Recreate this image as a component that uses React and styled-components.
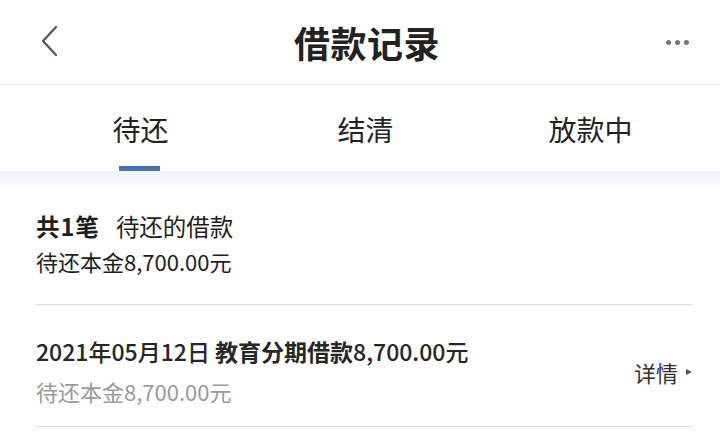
import styled, { createGlobalStyle } from "styled-components";

const GlobalStyle = createGlobalStyle`
  body {
    margin: 0;
    background: #fff;
    font-family: "Noto Sans CJK SC", "Noto Sans", sans-serif;
    color: #222;
  }
`;

const tabs = ["待还", "结清", "放款中"];

const App = () => {
  return (
    <Page>
      <GlobalStyle />
      <Header>
        <BackButton>
          <svg width="18" height="32" viewBox="0 0 18 32">
            <path d="M16 2 L3 16 L16 30" fill="none" stroke="#555" strokeWidth="2.2" strokeLinecap="round" strokeLinejoin="round" />
          </svg>
        </BackButton>
        <Title>借款记录</Title>
        <MoreButton>
          <Dot />
          <Dot />
          <Dot />
        </MoreButton>
      </Header>

      <TabBar>
        {tabs.map((t, i) => (
          <Tab key={t} active={i === 0}>
            {t}
          </Tab>
        ))}
      </TabBar>
      <Strip />

      <Content>
        <Summary>
          <Line size={23.5}>
            <Count>共1笔</Count>
            <Spaced>待还的借款</Spaced>
          </Line>
          <Line size={22}>待还本金8,700.00元</Line>
        </Summary>

        <Record>
          <RecordInfo>
            <RecordTitle>
              <Medium>2021年05月12日</Medium> <Strong>教育分期借款</Strong>8,700.00元
            </RecordTitle>
            <RecordSub>待还本金8,700.00元</RecordSub>
          </RecordInfo>
          <Detail>
            详情<Arrow />
          </Detail>
        </Record>
      </Content>
    </Page>
  );
};

export default App;

const Page = styled.div`
  width: 720px;
  height: 433px;
  overflow: hidden;
  background: #fff;
`;

const Header = styled.header`
  height: 85px;
  display: flex;
  align-items: center;
  justify-content: space-between;
  padding: 0 28px 0 40px;
  border-bottom: 1px solid #e6e6e6;
  box-sizing: border-box;
`;

const BackButton = styled.div`
  width: 18px;
  height: 32px;
  display: flex;
  margin-top: -2px;
`;

const Title = styled.h1`
  margin: 0 0 0 10px;
  font-size: 36px;
  font-weight: 700;
  color: #222;
  line-height: 1;
  letter-spacing: 0.5px;
`;

const MoreButton = styled.div`
  display: flex;
  gap: 4px;
  width: 26px;
`;

const Dot = styled.span`
  width: 5px;
  height: 5px;
  border-radius: 50%;
  background: #777;
`;

const TabBar = styled.nav`
  height: 86px;
  display: grid;
  grid-template-columns: repeat(3, 225px);
  padding-left: 28px;
`;

const Tab = styled.div`
  position: relative;
  display: flex;
  justify-content: center;
  padding-top: 26px;
  font-size: 28px;
  line-height: 36px;
  color: #222;

  &::after {
    content: "";
    display: ${(p) => (p.active ? "block" : "none")};
    position: absolute;
    bottom: 0;
    left: 50%;
    width: 41px;
    height: 5px;
    margin-left: -22px;
    background: #4a72b2;
  }
`;

const Strip = styled.div`
  height: 20px;
  background: linear-gradient(#edf4fb, #fff);
`;

const Content = styled.main`
  padding: 0 28px 0 36px;
`;

const Summary = styled.section`
  padding: 18px 0 25px;
  border-bottom: 1px solid #dcdde2;
`;

const Line = styled.div`
  font-size: ${(p) => p.size}px;
  line-height: 35px;
  color: #1e1e1e;
`;

const Strong = styled.span`
  font-weight: 700;
`;

const Count = styled.span`
  font-weight: 700;
  letter-spacing: 1px;
`;

const Medium = styled.span`
  font-weight: 500;
`;

const Spaced = styled.span`
  margin-left: 16px;
`;

const Record = styled.section`
  display: flex;
  align-items: center;
  justify-content: space-between;
  padding: 26px 0 15px;
  border-bottom: 1px solid #dcdde2;
`;

const RecordInfo = styled.div`
  display: flex;
  flex-direction: column;
`;

const RecordTitle = styled.div`
  font-size: 23px;
  line-height: 40px;
  color: #262626;
  font-weight: 500;
`;

const RecordSub = styled.div`
  font-size: 22px;
  line-height: 40px;
  color: #9a9a9a;
`;

const Detail = styled.div`
  display: flex;
  align-items: center;
  font-size: 22px;
  color: #333;
  margin-top: 2px;
`;

const Arrow = styled.span`
  margin-left: 8px;
  width: 0;
  height: 0;
  border-top: 3.5px solid transparent;
  border-bottom: 3.5px solid transparent;
  border-left: 6px solid #555;
`;
